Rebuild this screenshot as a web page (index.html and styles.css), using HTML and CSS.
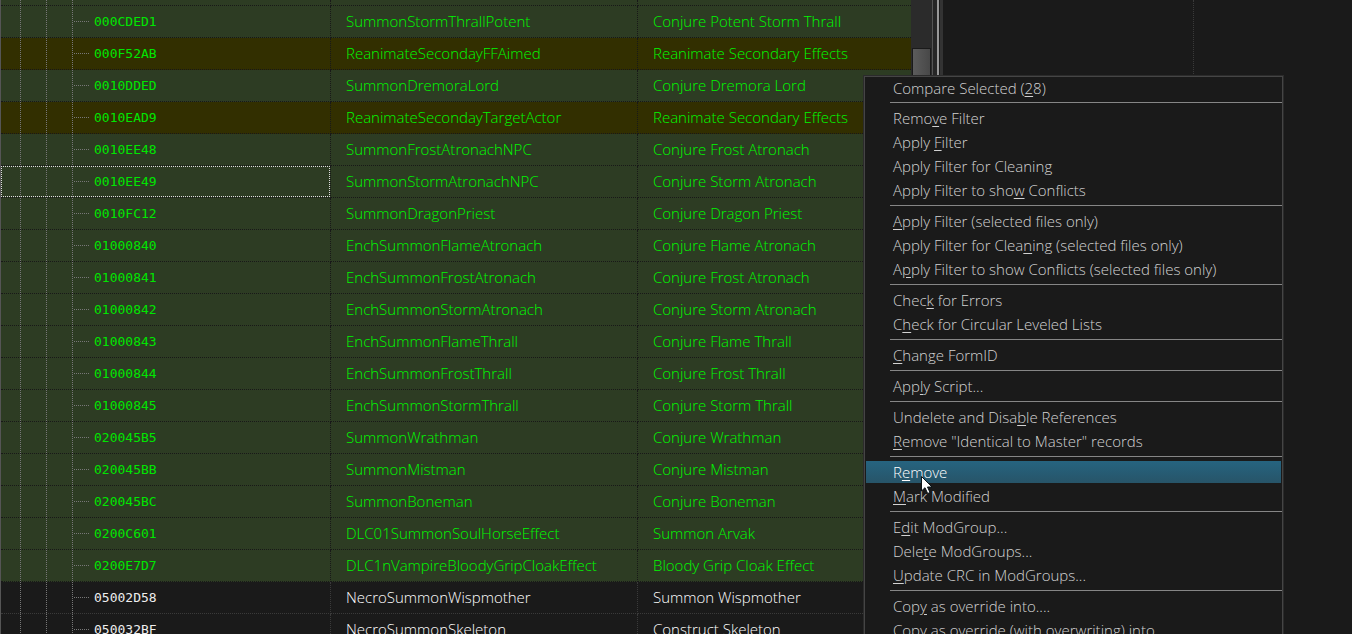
FILE: index.html
```html
<!DOCTYPE html>
<html lang="en">
<head>
<meta charset="utf-8">
<title>Records</title>
<link rel="stylesheet" href="styles.css">
</head>
<body>
<div class="app">
  <main class="tree">
    <table class="records">
      <colgroup><col class="col-id"><col class="col-editor"><col></colgroup>
      <tbody>
        <tr class="clipped"><td><span class="guides"></span></td><td></td><td></td></tr>
        <tr><td><span class="guides"></span><span class="id">000CDED1</span></td><td>SummonStormThrallPotent</td><td>Conjure Potent Storm Thrall</td></tr>
        <tr class="conflict"><td><span class="guides"></span><span class="id">000F52AB</span></td><td>ReanimateSecondayFFAimed</td><td>Reanimate Secondary Effects</td></tr>
        <tr><td><span class="guides"></span><span class="id">0010DDED</span></td><td>SummonDremoraLord</td><td>Conjure Dremora Lord</td></tr>
        <tr class="conflict"><td><span class="guides"></span><span class="id">0010EAD9</span></td><td>ReanimateSecondayTargetActor</td><td>Reanimate Secondary Effects</td></tr>
        <tr><td><span class="guides"></span><span class="id">0010EE48</span></td><td>SummonFrostAtronachNPC</td><td>Conjure Frost Atronach</td></tr>
        <tr class="focused"><td><span class="guides"></span><span class="id">0010EE49</span></td><td>SummonStormAtronachNPC</td><td>Conjure Storm Atronach</td></tr>
        <tr><td><span class="guides"></span><span class="id">0010FC12</span></td><td>SummonDragonPriest</td><td>Conjure Dragon Priest</td></tr>
        <tr><td><span class="guides"></span><span class="id">01000840</span></td><td>EnchSummonFlameAtronach</td><td>Conjure Flame Atronach</td></tr>
        <tr><td><span class="guides"></span><span class="id">01000841</span></td><td>EnchSummonFrostAtronach</td><td>Conjure Frost Atronach</td></tr>
        <tr><td><span class="guides"></span><span class="id">01000842</span></td><td>EnchSummonStormAtronach</td><td>Conjure Storm Atronach</td></tr>
        <tr><td><span class="guides"></span><span class="id">01000843</span></td><td>EnchSummonFlameThrall</td><td>Conjure Flame Thrall</td></tr>
        <tr><td><span class="guides"></span><span class="id">01000844</span></td><td>EnchSummonFrostThrall</td><td>Conjure Frost Thrall</td></tr>
        <tr><td><span class="guides"></span><span class="id">01000845</span></td><td>EnchSummonStormThrall</td><td>Conjure Storm Thrall</td></tr>
        <tr><td><span class="guides"></span><span class="id">020045B5</span></td><td>SummonWrathman</td><td>Conjure Wrathman</td></tr>
        <tr><td><span class="guides"></span><span class="id">020045BB</span></td><td>SummonMistman</td><td>Conjure Mistman</td></tr>
        <tr><td><span class="guides"></span><span class="id">020045BC</span></td><td>SummonBoneman</td><td>Conjure Boneman</td></tr>
        <tr><td><span class="guides"></span><span class="id">0200C601</span></td><td>DLC01SummonSoulHorseEffect</td><td>Summon Arvak</td></tr>
        <tr><td><span class="guides"></span><span class="id">0200E7D7</span></td><td>DLC1nVampireBloodyGripCloakEffect</td><td>Bloody Grip Cloak Effect</td></tr>
        <tr class="plain"><td><span class="guides"></span><span class="id">05002D58</span></td><td>NecroSummonWispmother</td><td>Summon Wispmother</td></tr>
        <tr class="plain"><td><span class="guides"></span><span class="id">050032BF</span></td><td>NecroSummonSkeleton</td><td>Construct Skeleton</td></tr>
      </tbody>
    </table>
  </main>
  <div class="scrollbar"><div class="thumb"></div></div>
  <div class="splitter"></div>
  <section class="detail"><div class="detail-column"></div></section>

  <div class="menu" role="menu">
    <button role="menuitem">Compare Selected (<u>2</u>8)</button>
    <hr>
    <button role="menuitem">Remo<u>v</u>e Filter</button>
    <button role="menuitem">Apply <u>F</u>ilter</button>
    <button role="menuitem">Apply Filter for Cleanin<u>g</u></button>
    <button role="menuitem">Apply Filter to sho<u>w</u> Conflicts</button>
    <hr>
    <button role="menuitem"><u>A</u>pply Filter (selected files only)</button>
    <button role="menuitem">Apply Filter for Clea<u>n</u>ing (selected files only)</button>
    <button role="menuitem">A<u>p</u>ply Filter to show Conflicts (selected files only)</button>
    <hr>
    <button role="menuitem">Chec<u>k</u> for Errors</button>
    <button role="menuitem">C<u>h</u>eck for Circular Leveled Lists</button>
    <hr>
    <button role="menuitem"><u>C</u>hange FormID</button>
    <hr>
    <button role="menuitem">App<u>l</u>y Script...</button>
    <hr>
    <button role="menuitem">Undelete and Disa<u>b</u>le References</button>
    <button role="menuitem"><u>R</u>emove "Identical to Master" records</button>
    <hr>
    <button role="menuitem" class="active">R<u>e</u>move
      <svg class="cursor" width="14" height="20" viewBox="0 0 14 20" aria-hidden="true"><path d="M1.500 1.500V16L5 12.700L7.700 18.500L10 17.500L7.500 12H12Z" fill="#fff" stroke="#0b1418"/></svg>
    </button>
    <button role="menuitem"><u>M</u>ark Modified</button>
    <hr>
    <button role="menuitem">E<u>d</u>it ModGroup...</button>
    <button role="menuitem">Dele<u>t</u>e ModGroups...</button>
    <button role="menuitem"><u>U</u>pdate CRC in ModGroups...</button>
    <hr>
    <button role="menuitem">Cop<u>y</u> as override into....</button>
    <button role="menuitem">Copy as override (with overwriting) into....</button>
  </div>
</div>
</body>
</html>
```
FILE: styles.css
```css
* { box-sizing: border-box; }

body {
  margin: 0;
  background: #1a1a1a;
  color: #d2d2d2;
  font: 300 15px/20px "Open Sans", "Noto Sans", sans-serif;
}

.app {
  position: relative;
  display: grid;
  grid-template-columns: 911fr 21px 11px 409fr;
  height: 100vh;
  overflow: hidden;
}

.tree {
  min-width: 0;
  overflow: hidden;
  border-left: 1px solid #555;
}

.records {
  width: 100%;
  table-layout: fixed;
  border-collapse: separate;
  border-spacing: 0;
}

.col-id { width: 330px; }
.col-editor { width: 307px; }

.records tr {
  height: 32px;
  background: #2d3c23;
  color: #00f800;
}

.records tr.clipped { height: 6px; }
.records tr.conflict { background: #322f00; }
.records tr.plain { background: #1a1a1a; color: #fff; }

.records td {
  position: relative;
  padding: 0 15px 2px;
  border-bottom: 1px dotted #181818;
  border-right: 1px dotted #181818;
  white-space: nowrap;
}

.records td:last-child { border-right: 0; }
.records .plain td { border-color: #3a3a3a; }
.records td:first-child { padding-left: 93px; }

.guides {
  position: absolute;
  inset: 0;
  background:
    repeating-linear-gradient(#777 0 1px, transparent 1px 2px) 19px 0 / 1px 100% no-repeat,
    repeating-linear-gradient(#777 0 1px, transparent 1px 2px) 45px 0 / 1px 100% no-repeat,
    repeating-linear-gradient(#777 0 1px, transparent 1px 2px) 71px 0 / 1px 100% no-repeat,
    repeating-linear-gradient(90deg, #777 0 1px, transparent 1px 2px) 73px 15px / 16px 1px no-repeat;
}

.clipped .guides { background-size: 1px 100%, 1px 100%, 1px 100%, 0 0; }
.focused .guides { border: 1px dotted #ddd; background-origin: border-box; }

.id {
  color: #00e600;
  font: 13px/20px "DejaVu Sans Mono", monospace;
}

.plain .id { color: #eee; }

.scrollbar {
  padding: 48px 1px 0;
  background: #2b2b2b;
}

.thumb {
  height: 80px;
  border: 1px solid #1a1a1a;
  background: linear-gradient(90deg, #5c5c5c, #484848);
}

.splitter {
  background: linear-gradient(90deg, #555 0 1px, #262626 1px 5px, #999 5px 7px, #1c1c1c 7px 8px, #333 8px 11px);
}

.detail { display: flex; }

.detail-column {
  width: 251px;
  border-right: 1px dotted #3a3a3a;
}

.menu {
  position: absolute;
  top: 75px;
  left: 863px;
  display: flex;
  flex-direction: column;
  width: 421px;
  padding-top: 1px;
  border: 1px solid #2b2b2b;
  outline: 1px solid #454545;
  outline-offset: -2px;
  background: #1a1a1a;
}

.menu button {
  position: relative;
  height: 24px;
  margin: 0 2px;
  padding: 0 0 2px 27px;
  border: 0;
  background: none;
  color: inherit;
  font: inherit;
  text-align: left;
  white-space: nowrap;
}

.menu .active {
  background: linear-gradient(#266480, #275468) 0 0 / 100% 22px no-repeat;
  color: #fff;
}

.menu hr {
  width: calc(100% - 27px);
  height: 1px;
  margin: 2px 0 4px 26px;
  border: 0;
  background: #868686;
}

.menu button:first-child + hr { margin-top: 1px; }

.menu u { text-underline-offset: 2px; }

.cursor {
  position: absolute;
  z-index: 1;
  top: 14px;
  left: 54px;
}
```
